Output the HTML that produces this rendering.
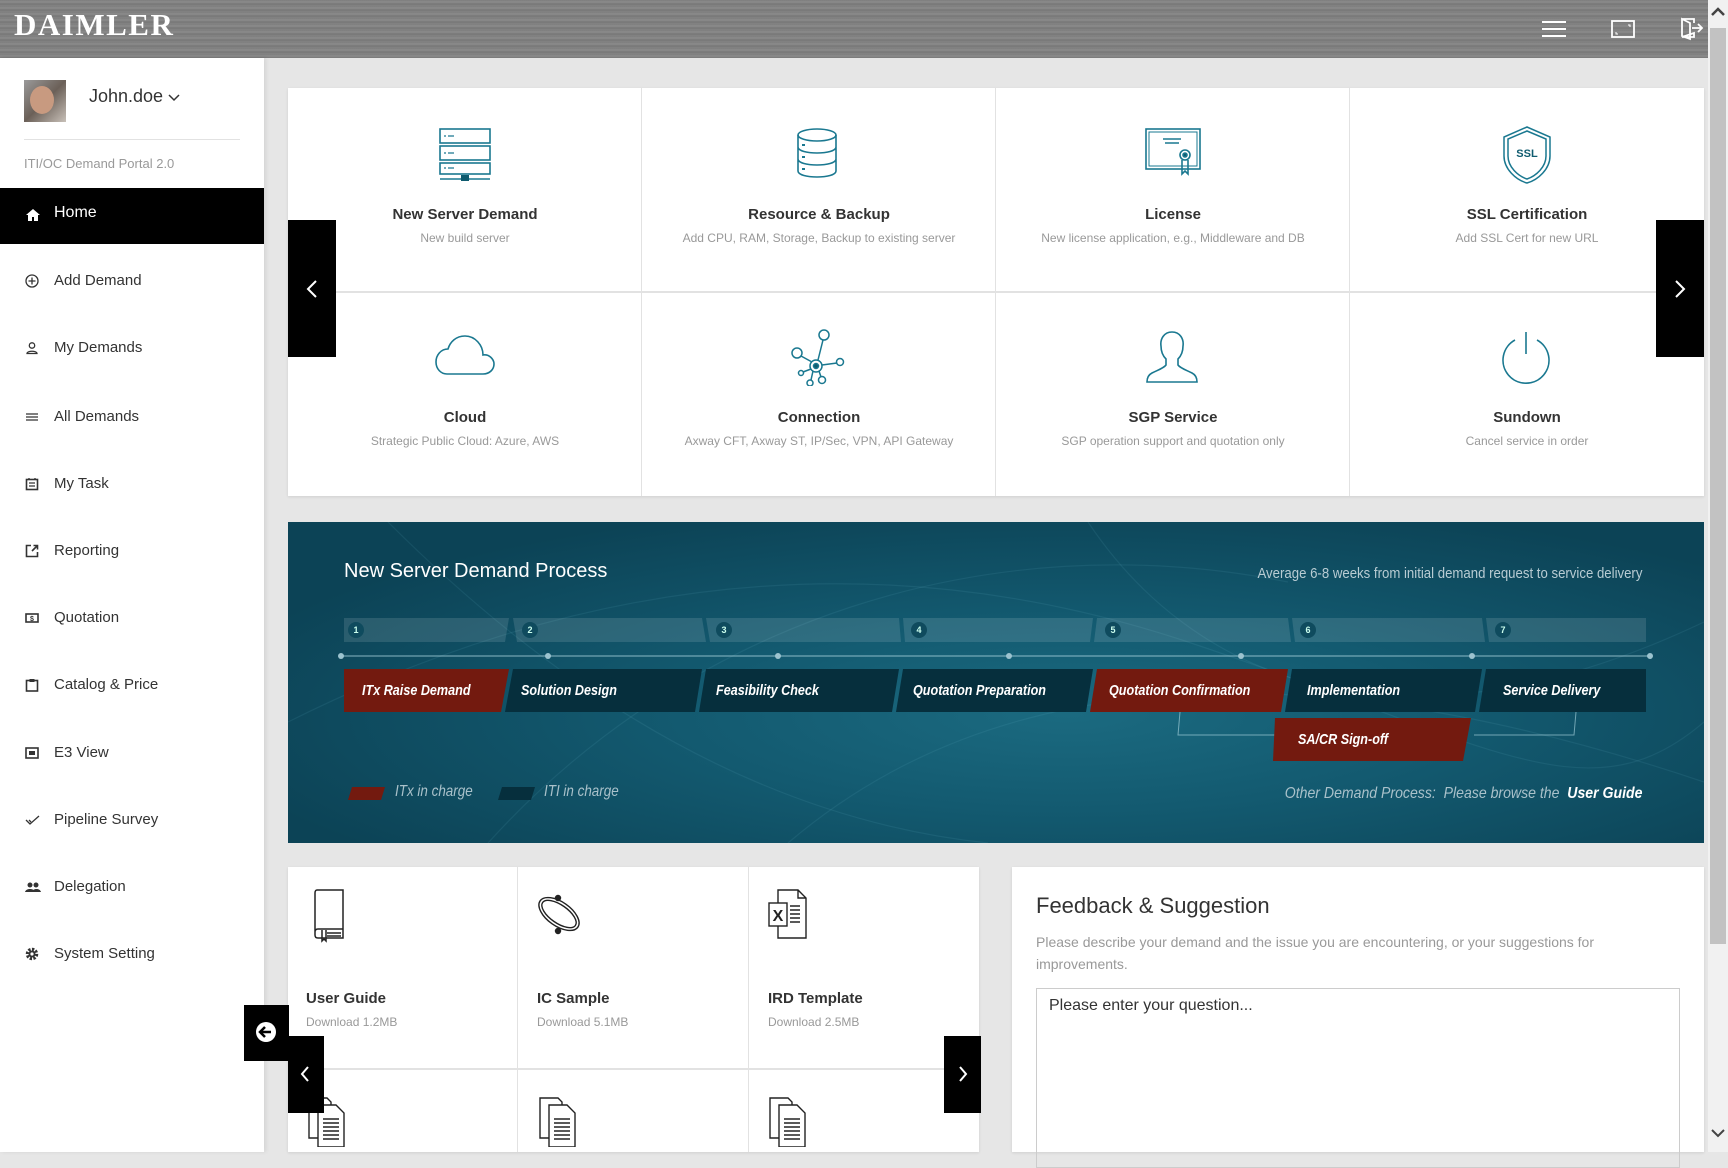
<!DOCTYPE html>
<html><head><meta charset="utf-8">
<style>
*{box-sizing:border-box;margin:0;padding:0}
body{width:1728px;height:1152px;overflow:hidden;background:#e6e6e6;font-family:"Liberation Sans",sans-serif;position:relative}
.abs{position:absolute}
#hdr{left:0;top:0;width:1708px;height:58px;background:repeating-linear-gradient(180deg,#7d7d7d 0px,#8c8c8c 2px,#767676 4px,#858585 6px),#808080;}
#hdr .logo{left:14px;top:7px;font-family:"Liberation Serif",serif;font-size:31px;font-weight:bold;color:#fff;letter-spacing:1.5px}
#side{left:0;top:58px;width:264px;height:1094px;background:#fff;box-shadow:2px 0 4px rgba(0,0,0,.08)}
.mi{position:absolute;left:0;width:264px;height:30px;font-size:15px;color:#333;line-height:30px}
.mi svg{position:absolute;left:25px;top:8px}
.mi span{position:absolute;left:54px}
.tiles{left:288px;top:88px;width:1416px;height:408px;background:#fff;box-shadow:0 1px 3px rgba(0,0,0,.1)}
.t{position:absolute;text-align:center;width:354px}
.t b{display:block;font-size:15px;color:#333;}
.t i{display:block;font-style:normal;font-size:12px;color:#999;margin-top:8px}
.blk{background:#000;position:absolute}
#proc{left:288px;top:522px;width:1416px;height:321px;overflow:hidden;background:radial-gradient(ellipse at 55% 60%,#1b6a80 0%,#135a70 35%,#0c4356 80%);}
.sq{display:inline-block;transform:scaleX(.84);transform-origin:left center;white-space:nowrap}
.sqr{display:inline-block;transform:scaleX(.88);transform-origin:right center;white-space:nowrap}
.panel{background:#fff;box-shadow:0 1px 3px rgba(0,0,0,.1)}
.dl b{position:absolute;font-size:15px;color:#333}
.dl i{position:absolute;font-size:12px;color:#999;font-style:normal}
.lbl{position:absolute;top:0;line-height:43px}
</style></head><body>

<div id="hdr" class="abs">
 <div class="abs logo">DAIMLER</div>
 <svg class="abs" style="left:1542px;top:20px" width="26" height="18"><g stroke="#fff" stroke-width="2"><line x1="0" y1="2" x2="24" y2="2"/><line x1="0" y1="9" x2="24" y2="9"/><line x1="0" y1="16" x2="24" y2="16"/></g></svg>
 <svg class="abs" style="left:1611px;top:20px" width="26" height="20"><rect x="1" y="1" width="22" height="16" fill="none" stroke="#fff" stroke-width="1.8"/><path d="M5 12v2h2M17 5h2v2" stroke="#fff" fill="none"/></svg>
 <svg class="abs" style="left:1680px;top:17px" width="26" height="24"><path d="M2 2h12v4M14 16v4H2z M2 2l8 4v16l-8-3z" fill="none" stroke="#fff" stroke-width="1.8"/><path d="M12 11h10M18 7l4 4-4 4" fill="none" stroke="#fff" stroke-width="1.8"/></svg>
</div>

<div class="abs" style="left:1708px;top:0;width:20px;height:1152px;background:#f1f1f1">
 <div class="abs" style="left:2px;top:28px;width:16px;height:916px;background:#c2c2c2"></div>
 <svg class="abs" style="left:3px;top:6px" width="14" height="10"><path d="M1 9l6-6 6 6" stroke="#444" stroke-width="2.5" fill="none"/></svg>
 <svg class="abs" style="left:3px;top:1128px" width="14" height="10"><path d="M1 2l6 6 6-6" stroke="#444" stroke-width="2" fill="none"/></svg>
</div>

<div id="side" class="abs">
 <div class="abs" style="left:24px;top:22px;width:42px;height:42px;background:linear-gradient(135deg,#9a9a9a,#6b6058 50%,#c8c0b8);"></div>
 <div class="abs" style="left:30px;top:28px;width:24px;height:28px;border-radius:50%;background:#c89a80"></div>
 <div class="abs" style="left:89px;top:28px;font-size:18px;color:#333">John.doe <svg width="12" height="8"><path d="M1 1l5 5 5-5" stroke="#333" stroke-width="1.5" fill="none"/></svg></div>
 <div class="abs" style="left:24px;top:81px;width:216px;height:1px;background:#e2e2e2"></div>
 <div class="abs" style="left:24px;top:98px;font-size:13px;color:#999">ITI/OC Demand Portal 2.0</div>
 <div class="abs" style="left:0;top:130px;width:264px;height:56px;background:#000"></div>
 <svg class="abs" style="left:26px;top:150px" width="14" height="14"><path d="M7 1L0 7h2v6h4V9h2v4h4V7h2z" fill="#fff"/></svg>
 <div class="abs" style="left:54px;top:146px;font-size:16px;color:#fff">Home</div>

 <div class="mi" style="top:208px"><svg width="14" height="14"><circle cx="7" cy="7" r="6" stroke="#333" stroke-width="1.3" fill="none"/><path d="M7 3.5v7M3.5 7h7" stroke="#333" stroke-width="1.3"/></svg><span>Add Demand</span></div>
 <div class="mi" style="top:275px"><svg width="14" height="14"><circle cx="7" cy="4.5" r="2.7" stroke="#333" stroke-width="1.3" fill="none"/><path d="M2 12.5c0-3 10-3 10 0z" stroke="#333" stroke-width="1.3" fill="none"/></svg><span>My Demands</span></div>
 <div class="mi" style="top:344px"><svg width="14" height="14"><path d="M1 4h12M1 7h12M1 10h12" stroke="#333" stroke-width="1.3"/></svg><span>All Demands</span></div>
 <div class="mi" style="top:411px"><svg width="14" height="14"><rect x="1.5" y="2.5" width="11" height="10" stroke="#333" stroke-width="1.6" fill="none"/><path d="M4 6h6M4 9h6M4 1v2M10 1v2" stroke="#333" stroke-width="1.3"/></svg><span>My Task</span></div>
 <div class="mi" style="top:478px"><svg width="14" height="14"><path d="M6 1.5H1.5v11h11V8" stroke="#333" stroke-width="1.6" fill="none"/><path d="M7 7l5.5-5.5M8.5 1.5h4v4" stroke="#333" stroke-width="1.6" fill="none"/></svg><span>Reporting</span></div>
 <div class="mi" style="top:545px"><svg width="14" height="14"><rect x="1" y="3" width="12" height="8" stroke="#333" stroke-width="1.6" fill="none"/><text x="7" y="10" font-size="7" text-anchor="middle" font-family="Liberation Sans" font-weight="bold" fill="#333">$</text></svg><span>Quotation</span></div>
 <div class="mi" style="top:612px"><svg width="14" height="14"><rect x="1.5" y="2.5" width="11" height="10.5" stroke="#333" stroke-width="1.6" fill="none"/><rect x="4.5" y="1" width="5" height="3" fill="#333"/></svg><span>Catalog &amp; Price</span></div>
 <div class="mi" style="top:680px"><svg width="14" height="14"><rect x="1" y="2" width="12" height="10" stroke="#333" stroke-width="1.6" fill="none"/><path d="M4 5h6v4H4z" fill="#333"/></svg><span>E3 View</span></div>
 <div class="mi" style="top:747px"><svg width="16" height="14"><path d="M1 7l4 4 9-8M4 7l2 2" stroke="#333" stroke-width="1.3" fill="none"/></svg><span>Pipeline Survey</span></div>
 <div class="mi" style="top:814px"><svg width="16" height="14"><circle cx="5" cy="5" r="2.5" fill="#333"/><circle cx="11" cy="5" r="2.5" fill="#333"/><path d="M0 12c1-4 9-4 10 0zM7 12c1-4 8-4 9 0z" fill="#333"/></svg><span>Delegation</span></div>
 <div class="mi" style="top:881px"><svg width="14" height="14"><circle cx="7" cy="7" r="4.5" fill="none" stroke="#333" stroke-width="3.5" stroke-dasharray="2.2 1.3"/><circle cx="7" cy="7" r="3.5" fill="#333"/><circle cx="7" cy="7" r="1.6" fill="#fff"/></svg><span>System Setting</span></div>
</div>

<!-- tiles -->
<div class="abs tiles">
 <div class="abs" style="left:0;top:203px;width:1416px;height:2px;background:#e2e2e2"></div>
 <div class="abs" style="left:353px;top:0;width:1px;height:408px;background:#e2e2e2"></div>
 <div class="abs" style="left:707px;top:0;width:1px;height:408px;background:#e2e2e2"></div>
 <div class="abs" style="left:1061px;top:0;width:1px;height:408px;background:#e2e2e2"></div>
 <svg class="abs" style="left:151px;top:40px" width="52" height="54" fill="none" stroke="#1a7890" stroke-width="1.6"><rect x="1" y="1" width="50" height="14"/><rect x="1" y="18" width="50" height="14"/><rect x="1" y="35" width="50" height="11"/><path d="M5 8h2M9 8h6M5 25h2M9 25h6M5 40h2M9 40h6" stroke-width="1.2"/><path d="M1 51h50" /><rect x="22" y="47" width="8" height="6" fill="#0f5b6f" stroke="none"/></svg>
 <div class="t" style="left:0;top:118px"><b>New Server Demand</b><i>New build server</i></div>
 <svg class="abs" style="left:508px;top:40px" width="42" height="52" fill="none" stroke="#1a7890" stroke-width="1.6"><ellipse cx="21" cy="7" rx="19" ry="6"/><path d="M2 7v36c0 8 38 8 38 0V7M2 19c0 8 38 8 38 0M2 31c0 8 38 8 38 0"/><path d="M6 17h3M6 29h3M6 41h3" stroke-width="2"/></svg>
 <div class="t" style="left:354px;top:118px"><b>Resource &amp; Backup</b><i>Add CPU, RAM, Storage, Backup to existing server</i></div>
 <svg class="abs" style="left:857px;top:40px" width="56" height="50" fill="none" stroke="#1a7890" stroke-width="1.6"><rect x="1" y="1" width="54" height="40"/><rect x="4" y="4" width="48" height="34" stroke-width="1"/><path d="M18 11h18M20 15h14"/><circle cx="40" cy="27" r="5"/><circle cx="40" cy="27" r="2" fill="#0f5b6f"/><path d="M37 32v14l3-3 3 3V32"/></svg>
 <div class="t" style="left:708px;top:118px"><b>License</b><i>New license application, e.g., Middleware and DB</i></div>
 <svg class="abs" style="left:1214px;top:38px" width="50" height="58" fill="none" stroke="#1a7890" stroke-width="1.5"><path d="M25 1L48 11v19c0 13-12 24-23 27C14 54 2 43 2 30V11z"/><path d="M25 5L44 13v17c0 11-10 20-19 23C16 50 6 41 6 30V13z"/><text x="25" y="31" font-family="Liberation Sans" font-size="11" font-weight="bold" fill="#0f5b6f" stroke="none" text-anchor="middle">SSL</text></svg>
 <div class="t" style="left:1062px;top:118px"><b>SSL Certification</b><i>Add SSL Cert for new URL</i></div>
 <svg class="abs" style="left:147px;top:246px" width="60" height="42" fill="none" stroke="#1a7890" stroke-width="1.6"><path d="M12 40h36c7 0 11-5 11-10s-5-10-11-9c0-10-8-19-18-19-9 0-15 6-17 13C6 15 1 21 1 28s5 12 11 12z"/></svg>
 <div class="t" style="left:0;top:321px"><b>Cloud</b><i>Strategic Public Cloud: Azure, AWS</i></div>
 <svg class="abs" style="left:501px;top:240px" width="58" height="58" fill="none" stroke="#1a7890" stroke-width="1.5"><circle cx="27" cy="38" r="6"/><circle cx="27" cy="38" r="2.5" fill="#0f5b6f"/><circle cx="35" cy="7" r="5"/><circle cx="8" cy="25" r="5"/><circle cx="51" cy="34" r="3.5"/><circle cx="33" cy="52" r="3.5"/><circle cx="21" cy="55" r="3"/><circle cx="12" cy="45" r="2.5"/><path d="M29 32l5-20M23 34l-11-6M33 37l15-2M30 43l2 6M24 43l-2 9M22 41l-8 3"/></svg>
 <div class="t" style="left:354px;top:321px"><b>Connection</b><i>Axway CFT, Axway ST, IP/Sec, VPN, API Gateway</i></div>
 <svg class="abs" style="left:858px;top:243px" width="52" height="52" fill="none" stroke="#1a7890" stroke-width="1.6"><path d="M26 1c-8 0-12 7-11 14 0 5 2 10 5 13v6c-2 3-8 5-14 8-4 2-5 6-5 9h50c0-3-1-7-5-9-6-3-12-5-14-8v-6c3-3 5-8 5-13 1-7-3-14-11-14z"/></svg>
 <div class="t" style="left:708px;top:321px"><b>SGP Service</b><i>SGP operation support and quotation only</i></div>
 <svg class="abs" style="left:1212px;top:242px" width="52" height="54" fill="none" stroke="#1a7890" stroke-width="1.6"><path d="M15 10a23 23 0 1 0 22 0"/><path d="M26 2v22"/></svg>
 <div class="t" style="left:1062px;top:321px"><b>Sundown</b><i>Cancel service in order</i></div>
</div>
<div class="blk" style="left:288px;top:220px;width:48px;height:137px"><svg class="abs" style="left:18px;top:60px" width="12" height="18"><path d="M10 1L2 9l8 8" stroke="#fff" stroke-width="2" fill="none"/></svg></div>
<div class="blk" style="left:1656px;top:220px;width:48px;height:137px"><svg class="abs" style="left:18px;top:60px" width="12" height="18"><path d="M2 1l8 8-8 8" stroke="#fff" stroke-width="2" fill="none"/></svg></div>

<!-- process -->
<div id="proc" class="abs">
 <svg class="abs" style="left:0;top:0" width="1416" height="321">
  <g stroke="rgba(120,200,220,0.10)" fill="none" stroke-width="1.2"><path d="M0 200C300 50 600 20 900 120S1300 300 1416 200"/><path d="M200 321C400 100 700 0 1000 60"/><path d="M500 321C700 150 1000 120 1416 260"/><path d="M800 0C900 150 1100 250 1416 100"/><path d="M100 0C300 200 500 300 700 321"/></g>
  <g fill="rgba(255,255,255,0.12)"><polygon points="56,96 221,96 217,120 56,120"/><polygon points="225,96 414,96 418,120 229,120"/><polygon points="418,96 611,96 613,120 422,120"/><polygon points="615,96 805,96 802,120 617,120"/><polygon points="809,96 1000,96 1003,120 806,120"/><polygon points="1004,96 1194,96 1197,120 1007,120"/><polygon points="1198,96 1358,96 1358,120 1201,120"/></g>
  <g fill="#0f4b5e"><circle cx="68" cy="108" r="8"/><circle cx="242" cy="108" r="8"/><circle cx="436" cy="108" r="8"/><circle cx="631" cy="108" r="8"/><circle cx="825" cy="108" r="8"/><circle cx="1020" cy="108" r="8"/><circle cx="1215" cy="108" r="8"/></g>
  <g fill="#cfe" font-family="Liberation Sans" font-size="9" font-weight="bold" text-anchor="middle"><text x="68" y="111">1</text><text x="242" y="111">2</text><text x="436" y="111">3</text><text x="631" y="111">4</text><text x="825" y="111">5</text><text x="1020" y="111">6</text><text x="1215" y="111">7</text></g>
  <line x1="53" y1="134" x2="1362" y2="134" stroke="rgba(180,220,230,0.5)" stroke-width="1.5"/>
  <g fill="#9cc3cf"><circle cx="53" cy="134" r="3"/><circle cx="260" cy="134" r="3"/><circle cx="490" cy="134" r="3"/><circle cx="721" cy="134" r="3"/><circle cx="953" cy="134" r="3"/><circle cx="1184" cy="134" r="3"/><circle cx="1362" cy="134" r="3"/></g>
  <polygon points="56,147 221,147 213,190 56,190" fill="#731a0f"/>
  <polygon points="225,147 414,147 407,190 217,190" fill="#062f3d"/>
  <polygon points="418,147 611,147 604,190 411,190" fill="#062f3d"/>
  <polygon points="615,147 805,147 798,190 608,190" fill="#062f3d"/>
  <polygon points="809,147 1000,147 993,190 802,190" fill="#731a0f"/>
  <polygon points="1004,147 1194,147 1187,190 997,190" fill="#062f3d"/>
  <polygon points="1198,147 1358,147 1358,190 1191,190" fill="#062f3d"/>
  <path d="M892 190l-2 23h100M1288 190l-2 23h-100" stroke="rgba(180,220,230,0.6)" fill="none"/>
  <polygon points="987,196 1183,196 1175,239 985,239" fill="#731a0f"/>
  <polygon points="64,265 97,265 93,278 60,278" fill="#731a0f"/>
  <polygon points="214,265 247,265 243,278 210,278" fill="#062f3d"/>
 </svg>
 <div class="abs" style="left:56px;top:38px;font-size:20px;color:#fff">New Server Demand Process</div>
 <div class="abs" style="right:62px;top:43px;font-size:15px;color:#b8ccd3"><span class="sqr">Average 6-8 weeks from initial demand request to service delivery</span></div>
 <div class="abs" style="top:147px;left:0;width:1416px;height:43px;font-size:15px;font-style:italic;font-weight:bold;color:#fff">
  <span class="lbl" style="left:74px"><span class="sq">ITx Raise Demand</span></span>
  <span class="lbl" style="left:233px"><span class="sq">Solution Design</span></span>
  <span class="lbl" style="left:428px"><span class="sq">Feasibility Check</span></span>
  <span class="lbl" style="left:625px"><span class="sq">Quotation Preparation</span></span>
  <span class="lbl" style="left:821px"><span class="sq">Quotation Confirmation</span></span>
  <span class="lbl" style="left:1019px"><span class="sq">Implementation</span></span>
  <span class="lbl" style="left:1215px"><span class="sq">Service Delivery</span></span>
 </div>
 <div class="abs" style="left:1010px;top:196px;line-height:43px;font-size:15px;font-style:italic;font-weight:bold;color:#fff"><span class="sq">SA/CR Sign-off</span></div>
 <div class="abs" style="left:107px;top:261px;font-size:16px;font-style:italic;color:#a9c1ca"><span class="sq">ITx in charge</span></div>
 <div class="abs" style="left:256px;top:261px;font-size:16px;font-style:italic;color:#a9c1ca"><span class="sq">ITI in charge</span></div>
 <div class="abs" style="right:62px;top:263px;font-size:16px;font-style:italic;color:#a9c1ca"><span class="sqr">Other Demand Process:&nbsp; Please browse the&nbsp; <b style="color:#fff">User Guide</b></span></div>
</div>

<!-- downloads -->
<div class="abs panel dl" style="left:288px;top:867px;width:691px;height:285px">
 <div class="abs" style="left:0;top:201px;width:691px;height:2px;background:#e2e2e2"></div>
 <div class="abs" style="left:229px;top:0;width:1px;height:285px;background:#e2e2e2"></div>
 <div class="abs" style="left:460px;top:0;width:1px;height:285px;background:#e2e2e2"></div>
 <svg class="abs" style="left:26px;top:22px" width="32" height="54" fill="none" stroke="#222" stroke-width="1.5"><path d="M3 1h26v48H4c-2 0-3-1-3-3V4c0-2 1-3 2-3zM1 43c0-2 1-3 3-3h25"/><path d="M13 44h14M13 47h14"/><path d="M8 41v11l2-2 2 2V41"/></svg>
 <b style="left:18px;top:123px">User Guide</b><i style="left:18px;top:148px">Download 1.2MB</i>
 <svg class="abs" style="left:248px;top:24px" width="46" height="46" fill="none" stroke="#222" stroke-width="1.4"><ellipse cx="23" cy="23" rx="23" ry="12" transform="rotate(35 23 23)"/><ellipse cx="23" cy="23" rx="20" ry="9" transform="rotate(35 23 23)"/><circle cx="22" cy="7" r="2.5" fill="#222"/><circle cx="22" cy="40" r="2.5" fill="#222"/></svg>
 <b style="left:249px;top:123px">IC Sample</b><i style="left:249px;top:148px">Download 5.1MB</i>
 <svg class="abs" style="left:480px;top:22px" width="40" height="50" fill="none" stroke="#222" stroke-width="1.4"><path d="M10 1h20l8 8v40H10z M30 1v8h8"/><rect x="1" y="14" width="18" height="23" fill="#fff"/><text x="10" y="32" font-family="Liberation Sans" font-weight="bold" font-size="16" fill="#222" stroke="none" text-anchor="middle">X</text><path d="M22 17h10M22 21h10M22 25h10M22 29h10M22 33h10"/></svg>
 <b style="left:480px;top:123px">IRD Template</b><i style="left:480px;top:148px">Download 2.5MB</i>
 <svg class="abs" style="left:20px;top:230px" width="40" height="50" fill="none" stroke="#222" stroke-width="1.4"><path d="M1 1h18l4 4v36H1z"/><path d="M10 8h18l8 8v34H10z" fill="#fff"/><path d="M15 22h16M15 26h16M15 30h16M15 34h16M15 38h16M15 42h16"/></svg>
 <svg class="abs" style="left:251px;top:230px" width="40" height="50" fill="none" stroke="#222" stroke-width="1.4"><path d="M1 1h18l4 4v36H1z"/><path d="M10 8h18l8 8v34H10z" fill="#fff"/><path d="M15 22h16M15 26h16M15 30h16M15 34h16M15 38h16M15 42h16"/></svg>
 <svg class="abs" style="left:481px;top:230px" width="40" height="50" fill="none" stroke="#222" stroke-width="1.4"><path d="M1 1h18l4 4v36H1z"/><path d="M10 8h18l8 8v34H10z" fill="#fff"/><path d="M15 22h16M15 26h16M15 30h16M15 34h16M15 38h16M15 42h16"/></svg>
</div>
<div class="blk" style="left:244px;top:1005px;width:45px;height:56px"><svg class="abs" style="left:11px;top:16px" width="22" height="22"><circle cx="11" cy="11" r="10" fill="#fff"/><path d="M16 11H6M10 6l-5 5 5 5" stroke="#000" stroke-width="2.5" fill="none"/></svg></div>
<div class="blk" style="left:288px;top:1036px;width:36px;height:77px"><svg class="abs" style="left:12px;top:30px" width="10" height="16"><path d="M8 1L2 8l6 7" stroke="#fff" stroke-width="2" fill="none"/></svg></div>
<div class="blk" style="left:944px;top:1036px;width:37px;height:77px"><svg class="abs" style="left:14px;top:30px" width="10" height="16"><path d="M2 1l6 7-6 7" stroke="#fff" stroke-width="2" fill="none"/></svg></div>

<!-- feedback -->
<div class="abs panel" style="left:1012px;top:867px;width:692px;height:285px">
 <div class="abs" style="left:24px;top:26px;font-size:22px;color:#333">Feedback &amp; Suggestion</div>
 <div class="abs" style="left:24px;top:64px;width:600px;font-size:14px;line-height:22px;color:#999">Please describe your demand and the issue you are encountering, or your suggestions for improvements.</div>
 <div class="abs" style="left:24px;top:121px;width:644px;height:180px;border:1px solid #ccc;padding:8px 12px;font-size:16px;color:#333">Please enter your question...</div>
</div>
</body></html>
